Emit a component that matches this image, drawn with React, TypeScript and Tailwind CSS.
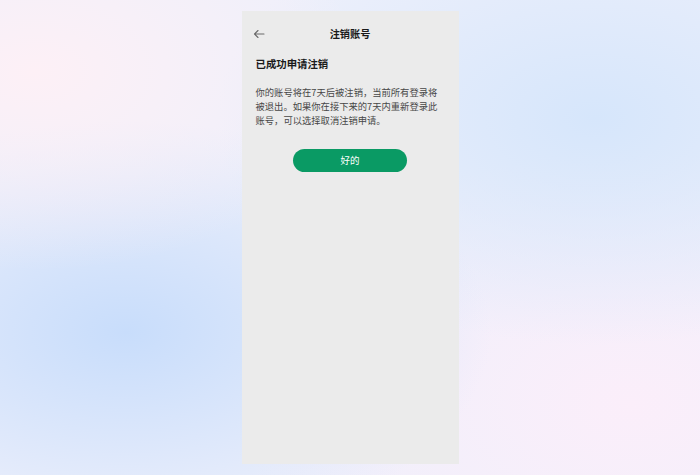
import React from 'react';

const font = { fontFamily: '"Noto Sans CJK SC", "Noto Sans", sans-serif' };

export default function App() {
  return (
    <div
      className="w-[700px] h-[475px] flex justify-center pt-[11px] bg-[#eef0fb] bg-[radial-gradient(ellipse_at_5%_15%,#fdf0f6_0%,transparent_35%),radial-gradient(ellipse_at_18%_70%,#c8ddfb_0%,transparent_45%),radial-gradient(ellipse_at_85%_25%,#d6e6fb_0%,transparent_45%),radial-gradient(ellipse_at_90%_85%,#fbeefa_0%,transparent_45%)]"
      style={font}
    >
      <div className="w-[217px] h-[453px] bg-[#ebebeb] px-[14px] flex flex-col">
        <div className="relative h-[45px] pt-[1px] flex items-center justify-center">
          <svg
            className="absolute left-[-3px] top-[18px]"
            width="12"
            height="10"
            viewBox="0 0 12 10"
            fill="none"
            stroke="#6b6b6b"
            strokeWidth="1.1"
            strokeLinecap="round"
            strokeLinejoin="round"
          >
            <path d="M11 5H1.5M5 1.5L1.5 5L5 8.5" />
          </svg>
          <span className="text-[10.2px] font-bold text-[#1a1a1a] leading-none">注销账号</span>
        </div>
        <div className="mt-[1px] text-[10.4px] font-bold text-[#1a1a1a] leading-[14px]">已成功申请注销</div>
        <p className="mt-[14px] text-[9.3px] leading-[14px] text-[#474747]">
          你的账号将在7天后被注销，当前所有登录将被退出。如果你在接下来的7天内重新登录此账号，可以选择取消注销申请。
        </p>
        <div className="flex justify-center mt-[22px]">
          <button className="w-[114px] h-[23px] rounded-full bg-[#0a9a64] text-white text-[9.5px] leading-none">
            好的
          </button>
        </div>
      </div>
    </div>
  );
}
